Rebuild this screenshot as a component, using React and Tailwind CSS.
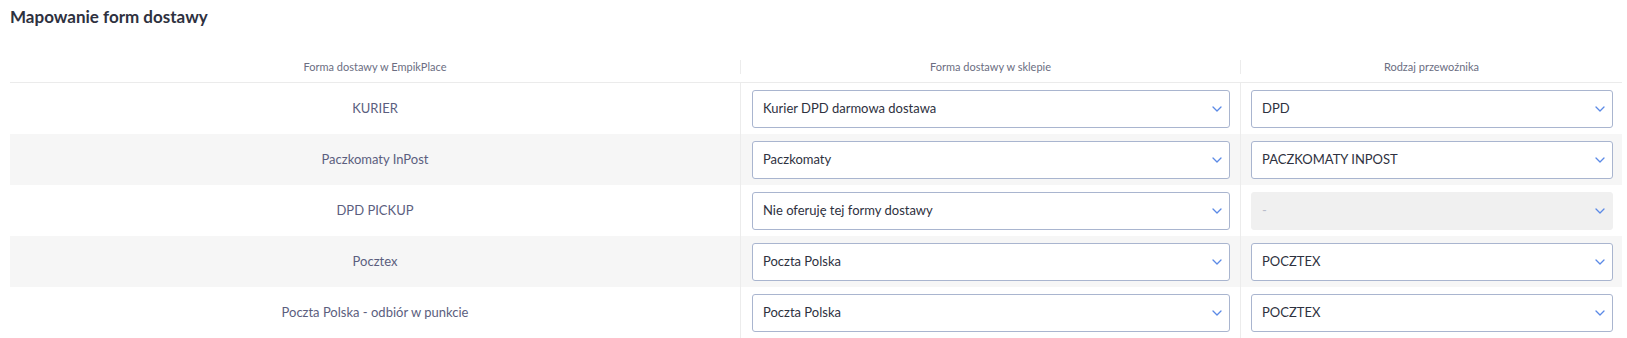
import React from "react";

const rows = [
  { name: "KURIER", shop: "Kurier DPD darmowa dostawa", carrier: "DPD" },
  { name: "Paczkomaty InPost", shop: "Paczkomaty", carrier: "PACZKOMATY INPOST" },
  { name: "DPD PICKUP", shop: "Nie oferuję tej formy dostawy", carrier: "-", disabled: true },
  { name: "Pocztex", shop: "Poczta Polska", carrier: "POCZTEX" },
  { name: "Poczta Polska - odbiór w punkcie", shop: "Poczta Polska", carrier: "POCZTEX" },
];

function Chevron() {
  return (
    <svg width="10" height="6" viewBox="0 0 10 6" fill="none" className="shrink-0">
      <path d="M1 1l4 4 4-4" stroke="#5b8ae6" strokeWidth="1.3" strokeLinecap="round" strokeLinejoin="round" />
    </svg>
  );
}

function Select({ value, disabled }) {
  return (
    <div
      className={
        disabled
          ? "flex h-[38px] w-full items-center justify-between rounded-[3px] border border-[#f0f0f0] bg-[#f0f0f0] pl-[10px] pr-[7px]"
          : "flex h-[38px] w-full items-center justify-between rounded-[3px] border border-[#a9b5cf] bg-white pl-[10px] pr-[7px]"
      }
    >
      <span className={disabled ? "text-[13px] text-[#b9bccb]" : "text-[13px] text-[#2e3140]"}>{value}</span>
      <Chevron />
    </div>
  );
}

export default function App() {
  return (
    <div className="bg-white pl-[10px] pr-[5px]" style={{ fontFamily: "Lato, 'Open Sans', sans-serif" }}>
      <div className="pt-[5px] text-[17px] font-bold leading-[24px] text-[#2e3140]">Mapowanie form dostawy</div>
      <div className="mt-[23px] grid h-[31px] grid-cols-[730px_500px_1fr] border-b border-[#ebebeb]">
        <div className="flex items-center justify-center text-[11px] text-[#6b6e82]">Forma dostawy w EmpikPlace</div>
        <div className="flex items-center justify-center">
          <div className="h-[14px] w-px bg-[#ececec]" />
          <div className="flex flex-1 items-center justify-center text-[11px] text-[#6b6e82]">Forma dostawy w sklepie</div>
        </div>
        <div className="flex items-center justify-center">
          <div className="h-[14px] w-px bg-[#ececec]" />
          <div className="flex flex-1 items-center justify-center text-[11px] text-[#6b6e82]">Rodzaj przewoźnika</div>
        </div>
      </div>
      {rows.map((r, i) => (
        <div
          key={i}
          className={
            i % 2 === 1
              ? "grid h-[51px] grid-cols-[730px_500px_1fr] bg-[#f6f6f6]"
              : "grid h-[51px] grid-cols-[730px_500px_1fr] bg-white"
          }
        >
          <div className="flex items-center justify-center text-[13px] text-[#5b5e7e]">{r.name}</div>
          <div className="flex items-center border-l border-[#ececec] pl-[11px] pr-[10px]">
            <Select value={r.shop} />
          </div>
          <div className="flex items-center border-l border-[#ececec] pl-[10px] pr-[9px]">
            <Select value={r.carrier} disabled={r.disabled} />
          </div>
        </div>
      ))}
    </div>
  );
}
